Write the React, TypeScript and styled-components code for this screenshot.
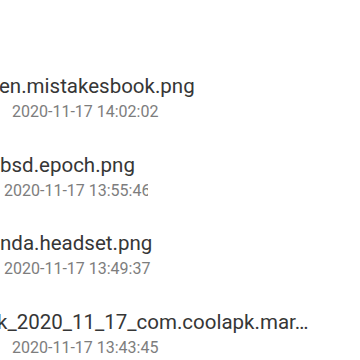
import React from "react";
import styled, { createGlobalStyle } from "styled-components";

const Global = createGlobalStyle`
  html, body { margin: 0; padding: 0; background: #ffffff; }
  body { font-family: Roboto, "Noto Sans", "Liberation Sans", sans-serif; }
`;

const Page = styled.div`
  width: 360px;
  height: 360px;
  overflow: hidden;
  background: #ffffff;
  display: flex;
  flex-direction: column;
  padding-top: 73px;
  box-sizing: border-box;
`;

const Item = styled.div`
  flex: 0 0 78.5px;
  display: flex;
  flex-direction: column;
  gap: 2px;
  overflow: hidden;
`;

const Name = styled.div<{ $shift: number }>`
  margin-left: ${(p) => -p.$shift}px;
  font-size: 20.5px;
  line-height: 27px;
  color: #363636;
  white-space: nowrap;
`;

const DateWrap = styled.div<{ $indent: number; $clip?: number }>`
  padding-left: ${(p) => p.$indent}px;
  ${(p) => (p.$clip ? `width: ${p.$clip}px; overflow: hidden;` : "")}
  white-space: nowrap;
  line-height: 19px;
`;

const DateText = styled.span`
  font-size: 16px;
  color: #7d7d7d;
`;

const items = [
  { name: "en.mistakesbook.png", shift: 1, date: "2020-11-17 14:02:02", indent: 12 },
  { name: "bsd.epoch.png", shift: 0, date: "2020-11-17 13:55:46", indent: 4, clip: 144 },
  { name: "nda.headset.png", shift: 0, date: "2020-11-17 13:49:37", indent: 4 },
  { name: "k_2020_11_17_com.coolapk.mar…", shift: 3, date: "2020-11-17 13:43:45", indent: 12 },
];

export default function App() {
  return (
    <>
      <Global />
      <Page>
        {items.map((it) => (
          <Item key={it.date}>
            <Name $shift={it.shift}>{it.name}</Name>
            <DateWrap $indent={it.indent} $clip={it.clip}>
              <DateText>{it.date}</DateText>
            </DateWrap>
          </Item>
        ))}
      </Page>
    </>
  );
}
